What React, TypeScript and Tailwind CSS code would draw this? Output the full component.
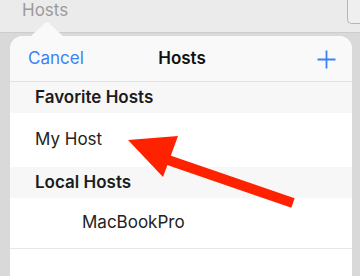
const font = { fontFamily: "Inter, 'Noto Sans', sans-serif" };

function PlusIcon() {
  return (
    <svg width="19" height="19" viewBox="0 0 19 19">
      <path d="M9.5 0.5v18M0.5 9.5h18" stroke="#3a82f7" strokeWidth="1.8" />
    </svg>
  );
}

function Section({ title }: { title: string }) {
  return (
    <div className="h-[31px] bg-[#f7f7f7] flex items-center pl-[25px] text-[17px] font-semibold text-[#1c1c1c]">
      {title}
    </div>
  );
}

export default function App() {
  return (
    <div className="relative w-[360px] h-[276px] overflow-hidden bg-[#d9d9d9]" style={font}>
      {/* toolbar behind the popover */}
      <div className="h-[33px] bg-[#ebebeb] border-b border-[#cdcdcd] flex items-start justify-between">
        <span className="pl-[22px] text-[17px] leading-[20px] text-[#9b9b9b]">Hosts</span>
        <div className="w-[13px] h-[24px] rounded-bl-[5px] border-l border-b border-[#b5b5b5] bg-[#efefef]" />
      </div>

      {/* popover */}
      <div className="ml-[10px] mr-[8px] mt-[3px] rounded-t-[13px] bg-white overflow-hidden">
        <div className="h-[46px] grid grid-cols-3 items-center pl-[18px] pr-[16px] pt-[1px] bg-[#f9f9f9] border-b border-[#e2e2e2]">
          <span className="text-[17px] text-[#3a82f7]">Cancel</span>
          <span className="text-center text-[17px] font-semibold text-[#111]">Hosts</span>
          <span className="flex justify-end">
            <PlusIcon />
          </span>
        </div>
        <Section title="Favorite Hosts" />
        <div className="h-[54px] flex items-center pl-[25px] text-[17px] text-[#222]">My Host</div>
        <Section title="Local Hosts" />
        <div className="h-[51px] flex items-center pl-[72px] text-[17px] text-[#222] border-b border-[#e6e6e6]">
          MacBookPro
        </div>
        <div className="h-[40px]" />
      </div>

      {/* popover pointer */}
      <svg className="absolute left-[30px] top-[21px]" width="34" height="17" viewBox="0 0 34 17">
        <path d="M0 16 L14.5 2.5 Q17 0.5 19.5 2.5 L34 16 Z" fill="#f9f9f9" />
      </svg>

      {/* red annotation arrow */}
      <svg className="absolute left-0 top-0" width="360" height="276" viewBox="0 0 360 276">
        <path d="M168 160 L293 203" stroke="#ff2200" strokeWidth="10" />
        <polygon points="128,140 178,136 163,177" fill="#ff2200" />
      </svg>
    </div>
  );
}
